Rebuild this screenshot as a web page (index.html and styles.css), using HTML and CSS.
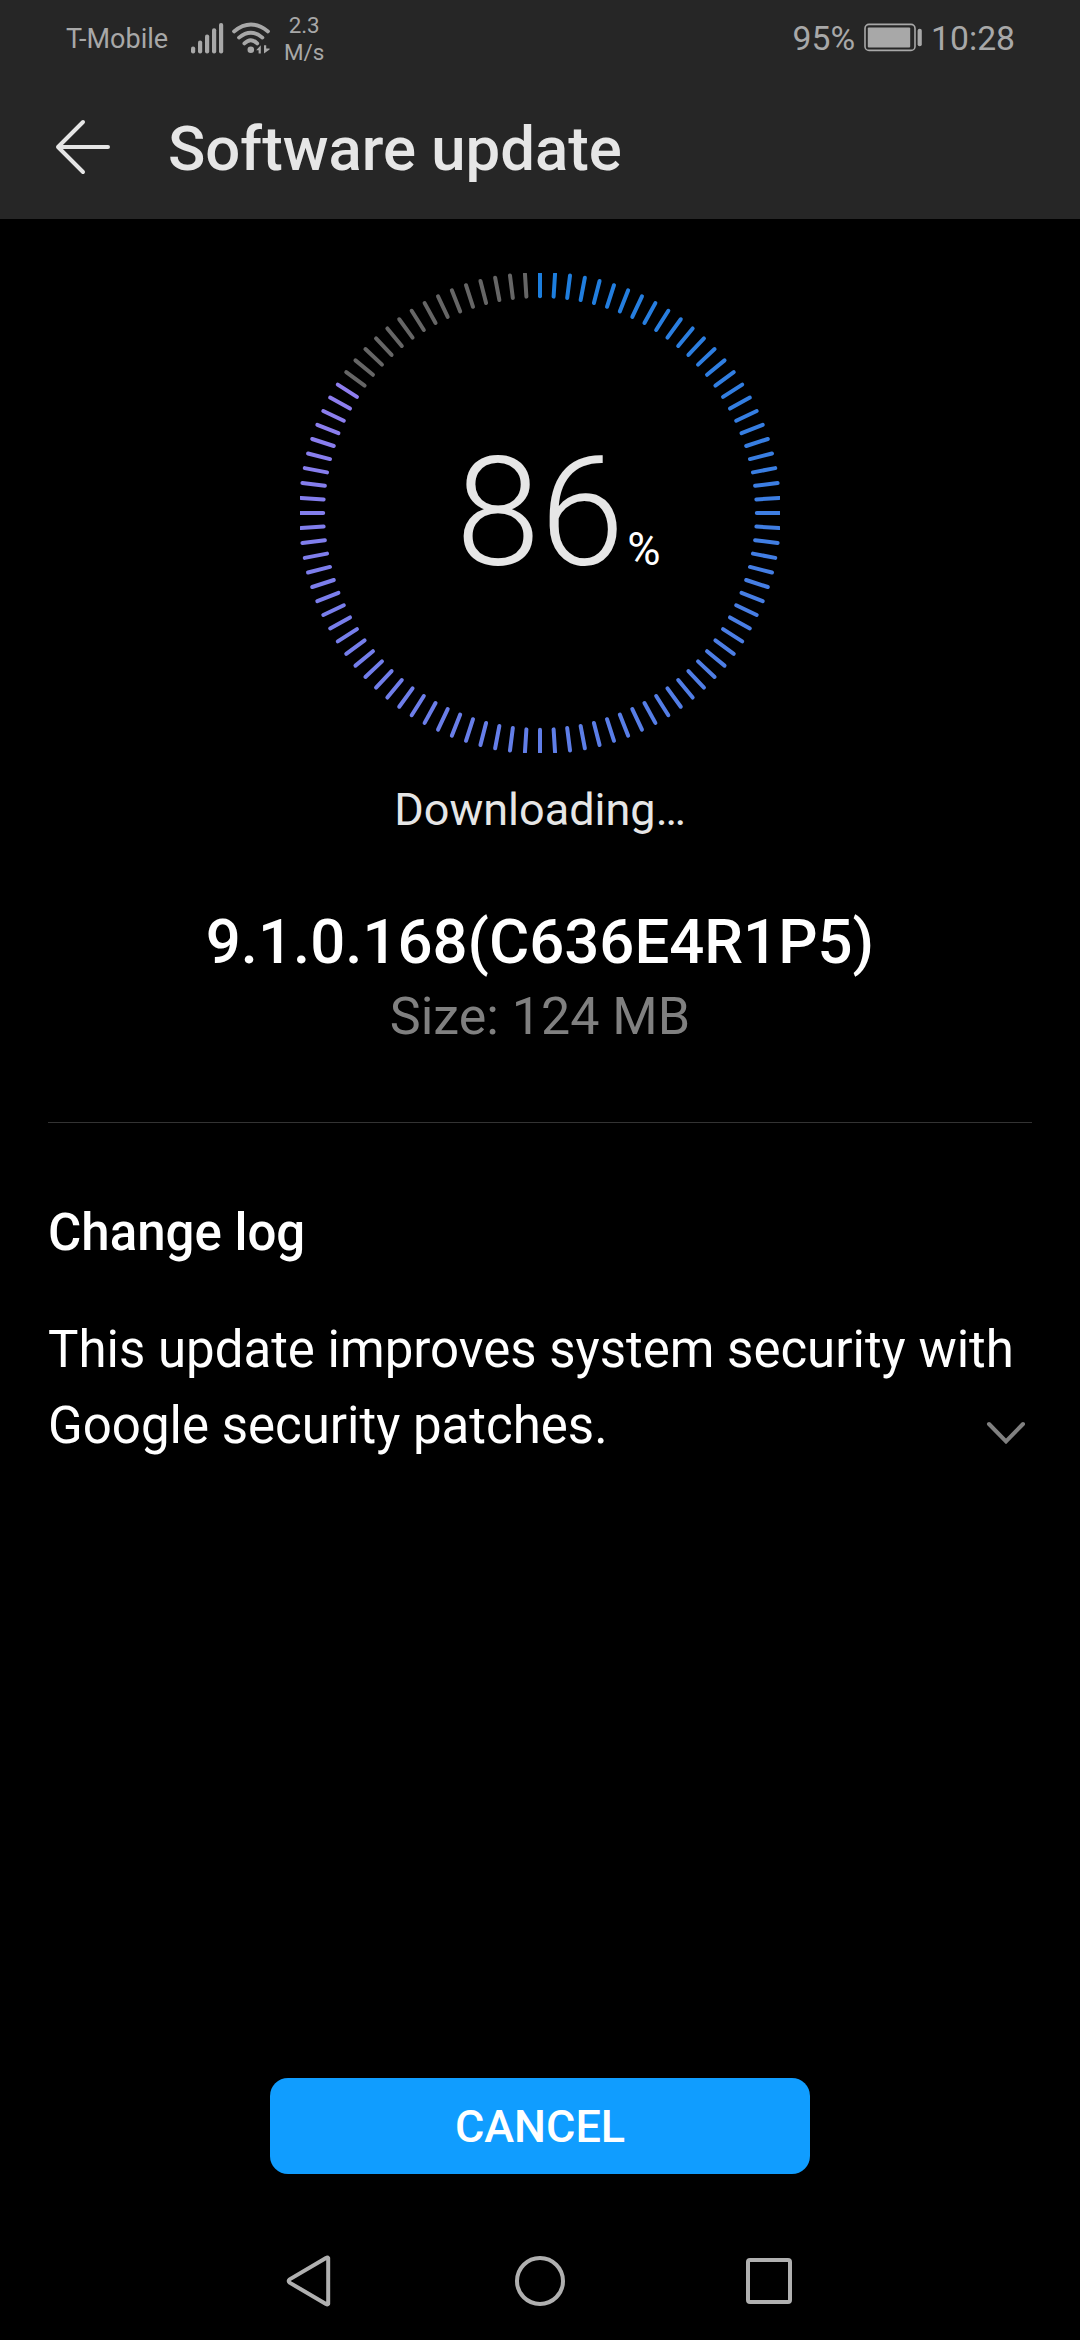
FILE: index.html
```html
<!DOCTYPE html>
<html lang="en">
<head>
<meta charset="utf-8">
<title>Software update</title>
<link rel="stylesheet" href="styles.css">
</head>
<body>
<div class="screen">
  <div class="top">
    <div class="status">
      <span class="carrier">T-Mobile</span>
      <svg class="signal" width="34" height="34" viewBox="0 0 34 34">
        <rect x="1" y="25.5" width="4.2" height="7" rx="2"/>
        <rect x="8" y="19.5" width="4.2" height="13" rx="2"/>
        <rect x="15" y="13.5" width="4.2" height="19" rx="2"/>
        <rect x="22" y="7.2" width="4.2" height="25.3" rx="2"/>
        <rect x="29" y="2" width="4.2" height="30.5" rx="2"/>
      </svg>
      <svg class="wifi" width="40" height="34" viewBox="0 0 40 34">
        <g class="waves">
          <path d="M3 10.4Q20 -3.4 37 10.4"/>
          <path d="M8 16.6Q20 6.8 31.4 16.6"/>
          <path d="M13.4 22.4Q19.8 16 26.2 22.4"/>
        </g>
        <circle cx="19.8" cy="28.7" r="3.3"/>
        <path d="M25.2 29.2L29.8 24.2V32.4H27.6V29.2ZM33 24.2H35.2V27.6H38.6V28.6L33 32.4Z"/>
      </svg>
      <span class="speed">2.3<br>M/s</span>
      <span class="percent">95%</span>
      <svg class="battery" width="60" height="30" viewBox="0 0 60 30">
        <rect class="case" x="1" y="1.4" width="50" height="26" rx="4"/>
        <rect x="3.8" y="4.4" width="42.4" height="20" rx="1"/>
        <rect x="53.6" y="5.8" width="4.2" height="17.4" rx="2"/>
      </svg>
      <span class="clock">10:28</span>
    </div>
    <header class="appbar">
      <svg class="back" width="60" height="60" viewBox="0 0 60 60"><path d="M30 5L5 30L30 55M5 30H55"/></svg>
      <h1 class="title">Software update</h1>
    </header>
  </div>
  <main class="main">
    <div class="ring">
      <svg class="ticks" width="480" height="480" viewBox="-240 -240 480 480"></svg>
      <div class="progress"><span class="number">86</span><span class="sign">%</span></div>
    </div>
    <p class="state">Downloading…</p>
    <p class="version">9.1.0.168(C636E4R1P5)</p>
    <p class="size">Size: 124 MB</p>
    <section class="changes">
      <h2 class="heading">Change log</h2>
      <p class="log">This update improves system security with Google security patches.</p>
      <svg class="chevron" width="40" height="26" viewBox="0 0 40 26"><path d="M3 3L20 20.5L37 3"/></svg>
    </section>
  </main>
  <button class="cancel">CANCEL</button>
  <nav class="nav">
    <svg width="56" height="56" viewBox="0 0 56 56"><path d="M45.2 5.2V50.8Q44.5 51.8 43 51L6.6 29.6Q5 28 6.6 26.4L43 5Q44.5 4.2 45.2 5.2Z"/></svg>
    <svg width="56" height="56" viewBox="0 0 56 56"><circle cx="28" cy="28" r="23"/></svg>
    <svg width="56" height="56" viewBox="0 0 56 56"><rect x="7" y="7" width="42" height="42" rx="2"/></svg>
  </nav>
</div>
<script src="ring.js"></script>
</body>
</html>
```
FILE: styles.css
```css
* { margin: 0; padding: 0; box-sizing: border-box; }
body { background: #000; font-family: Roboto, "Liberation Sans", sans-serif; color: #fff; }
svg { display: block; flex: none; }
.screen { width: 1080px; height: 2340px; display: flex; flex-direction: column; }

.top { background: #262626; height: 219px; }
.status { height: 76px; padding: 0 65px 0 66px; display: flex; align-items: center; color: #a8a8a8; fill: #a8a8a8; white-space: nowrap; }
.carrier { font-size: 27px; line-height: 34px; width: 124px; padding-top: 1px; }
.signal { margin-right: 7px; }
.wifi .waves { fill: none; stroke: #a8a8a8; stroke-width: 3.8; stroke-linecap: round; }
.speed { margin-left: 13px; font-size: 22.4px; line-height: 27px; text-align: center; padding-top: 2px; }
.percent { margin-left: auto; font-size: 33.7px; line-height: 42px; padding-top: 2px; }
.battery { margin: 0 7px 0 9px; }
.battery .case { fill: none; stroke: #a8a8a8; stroke-width: 1.6; }
.clock { font-size: 33.7px; line-height: 42px; padding-top: 2px; }

.appbar { height: 143px; display: flex; align-items: center; padding: 0 0 2px 53px; }
.back { fill: none; stroke: #e6e6e6; stroke-width: 4; stroke-linecap: round; stroke-linejoin: round; }
.title { margin-left: 55px; padding-top: 4px; font-size: 61.7px; font-weight: 500; line-height: 80px; color: #e6e6e6; }

.main { flex: 1; padding: 54px 48px 0; text-align: center; }
.ring { width: 480px; height: 480px; margin: 0 auto; display: grid; }
.ring > * { grid-area: 1 / 1; }
.ticks { stroke-width: 4; stroke-linecap: round; }
.progress { align-self: center; display: grid; grid-template-columns: 1fr auto 1fr; align-items: baseline; text-align: left; }
.number { grid-column: 2; font-size: 152px; font-weight: 300; line-height: 180px; color: #e6e6e6; }
.sign { font-size: 45.5px; padding-left: 3px; }
.state { margin-top: 27px; font-size: 45px; line-height: 60px; color: #e6e6e6; }
.version { margin-top: 62px; font-size: 61.7px; font-weight: 500; line-height: 80px; }
.size { margin-top: 2px; font-size: 52px; line-height: 66px; color: #808080; }
.changes { position: relative; margin-top: 72px; padding-top: 77px; border-top: 1px solid #333; text-align: left; }
.heading { font-size: 51px; font-weight: 500; line-height: 66px; }
.log { margin-top: 46px; font-size: 51px; line-height: 76px; }
.chevron { position: absolute; right: 6px; bottom: 17px; fill: none; stroke: #808080; stroke-width: 4; stroke-linecap: round; }

.cancel { align-self: center; width: 540px; height: 96px; padding-top: 2px; border: 0; border-radius: 18px; background: #109dff; color: #fff; font: 500 45px/94px Roboto, "Liberation Sans", sans-serif; }
.nav { height: 118px; margin-top: 48px; padding: 0 283px; display: flex; justify-content: space-between; align-items: center; fill: none; stroke: #b0b0b0; stroke-width: 4; stroke-linejoin: round; }
```
FILE: ring.js
```js
// Draws the 100 ticks of the progress ring, clockwise from the top.
const ring = document.querySelector('.ticks');
const done = 85;
for (let i = 0; i < 100; i++) {
  const line = document.createElementNS('http://www.w3.org/2000/svg', 'line');
  line.setAttribute('y1', -239.5);
  line.setAttribute('y2', -216.8);
  line.setAttribute('transform', `rotate(${i * 3.6})`);
  const red = Math.round(28 + i * 1.37);
  const blue = Math.round(222 + i * 0.2);
  line.setAttribute('stroke', i < done ? `rgb(${red},126,${blue})` : '#666');
  ring.append(line);
}
```
